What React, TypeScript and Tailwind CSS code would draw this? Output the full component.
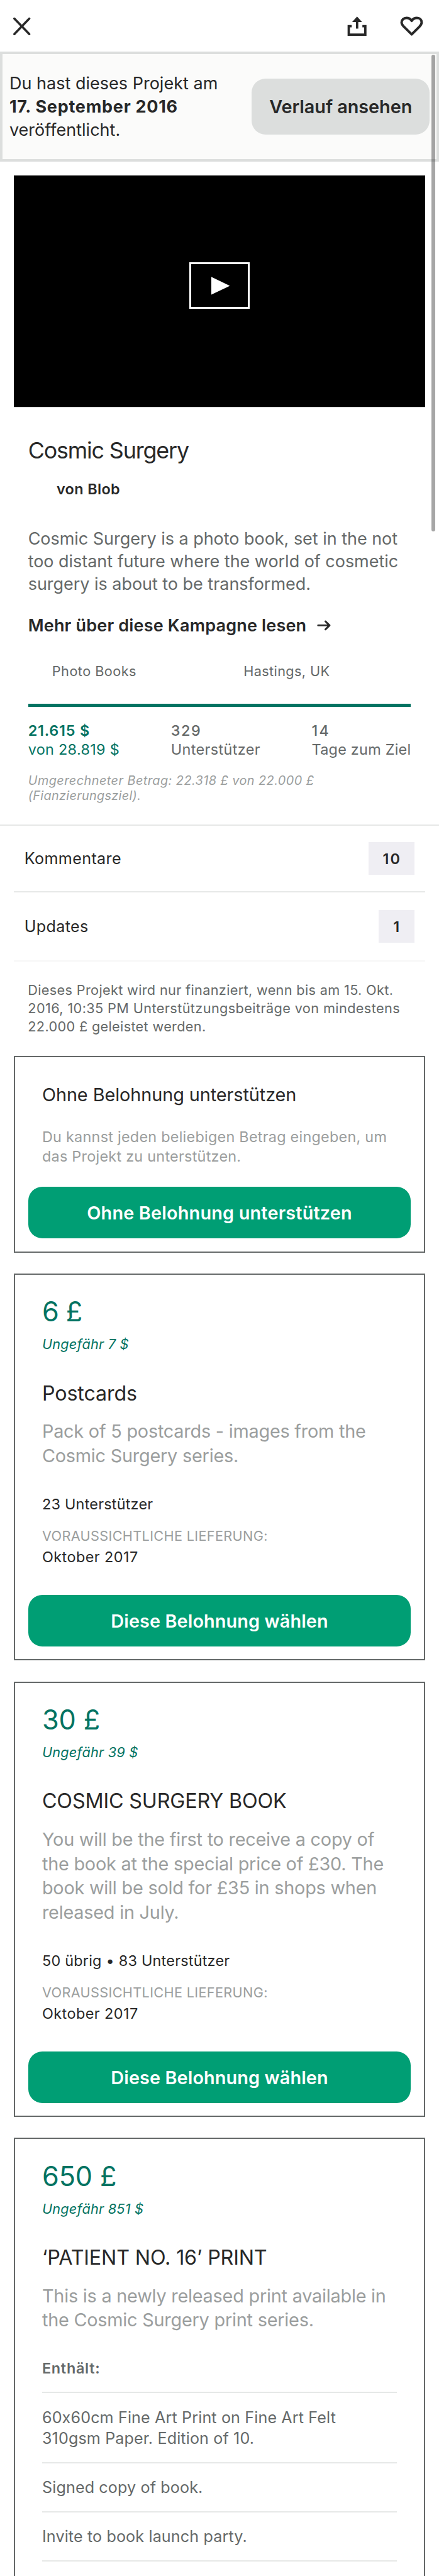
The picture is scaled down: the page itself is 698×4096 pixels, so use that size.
import type { ReactNode } from 'react'

function CloseIcon() {
  return (
    <svg width="32" height="32" viewBox="0 0 32 32" fill="none" stroke="#282828" strokeWidth="3.8" strokeLinecap="round">
      <path d="M3 2.8 28.6 29.2M28.6 2.8 3 29.2" />
    </svg>
  )
}

function ShareIcon() {
  return (
    <svg width="34" height="34" viewBox="593 28 34 34">
      <path d="M600.7 44.7H595.7V59.3H624V44.7H619" fill="none" stroke="#282828" strokeWidth="4" />
      <path d="M609.9 28.4 618.4 37.8H612V49H608V37.8H601.5Z" fill="#282828" />
    </svg>
  )
}

function HeartIcon() {
  return (
    <svg width="40" height="34" viewBox="683 28 40 34" fill="none" stroke="#282828" strokeWidth="4.2" strokeLinejoin="round">
      <path d="M703 58.8 689.6 45.6C687 42.8 685.7 41 685.7 38.4 685.7 33.9 689.4 30.7 694 30.7 698.2 30.7 701.2 32.8 703 35.6 704.8 32.8 707.8 30.7 712 30.7 716.6 30.7 720 33.9 720 38.4 720 41 718.8 42.8 716.2 45.6Z" />
    </svg>
  )
}

function Header() {
  return (
    <header className="flex h-[88px] items-start justify-between pl-[22px] pr-[27px] pt-[29px]">
      <CloseIcon />
      <div className="-mt-px flex gap-[56px]">
        <ShareIcon />
        <HeartIcon />
      </div>
    </header>
  )
}

function CreatorBanner() {
  return (
    <section className="flex h-[188px] items-center justify-between border-[4.3px] border-[#dcdedd] bg-[#fbfbfa] pl-[11.7px] pr-[11.7px]">
      <p className="pt-[1px] text-[29px] leading-[40px] tracking-[0.001em]">
        Du hast dieses Projekt am
        <br />
        <strong className="font-bold tracking-[0.028em]">17. September 2016</strong>
        <br />
        veröffentlicht.
      </p>
      <button className="flex h-[96px] w-[304px] items-center justify-center rounded-[24px] bg-[#dcdedd] text-[31px] font-semibold tracking-[-0.002em]">
        Verlauf ansehen
      </button>
    </section>
  )
}

function Video() {
  return (
    <section className="mx-[24px] mt-[24px] flex h-[397px] flex-col">
      <div className="flex grow items-center justify-center bg-black">
        <div className="mb-[19px] flex h-[80px] w-[104px] items-center justify-center border-[3.3px] border-white">
          <svg width="32" height="31" viewBox="0 0 32 31" className="ml-[3px]">
            <path d="M0 0.3 31.7 15.5 0 30.7Z" fill="#fff" />
          </svg>
        </div>
      </div>
      <div className="h-[2px] shrink-0 bg-[#e4e4e4]" />
    </section>
  )
}

function Project() {
  return (
    <section className="px-[48px]">
      <h1 className="mt-[50.2px] text-[38.5px] leading-[46px] tracking-[-0.032em]">Cosmic Surgery</h1>
      <div className="mt-[27.8px] pl-[48.6px] text-[25.2px] font-semibold leading-[31px] tracking-[0.015em]">von Blob</div>
      <p className="mt-[49.9px] whitespace-nowrap text-[29px] leading-[38.6px] tracking-[-0.001em] text-[#656969]">
        Cosmic Surgery is a photo book, set in the not
        <br />
        too distant future where the world of cosmetic
        <br />
        surgery is about to be transformed.
      </p>
      <div className="mt-[30.8px] flex items-center gap-[18px] text-[29px] font-semibold leading-[40px] tracking-[0.007em]">
        Mehr über diese Kampagne lesen
        <svg width="24" height="18" viewBox="0 0 24 18" fill="none" stroke="#282828" strokeWidth="3.2" strokeLinecap="round" strokeLinejoin="round">
          <path d="M2 9H21M14.5 2.2 21.4 9 14.5 15.8" />
        </svg>
      </div>
      <div className="mt-[43.2px] flex text-[23.3px] leading-[31px] text-[#656969]">
        <span className="w-[327px] pl-[41px] tracking-[0.021em]">Photo Books</span>
        <span className="pl-[41px] tracking-[0.0175em]">Hastings, UK</span>
      </div>
      <div className="mt-[39.1px] h-[6px] bg-[#037362]" />
      <div className="mt-[24.4px] flex text-[25.2px] leading-[32px] text-[#656969]">
        <div className="w-[244px] text-[#037362]">
          <div className="font-semibold tracking-[0.033em]">21.615 $</div>
          <div className="tracking-[0.0123em]">von 28.819 $</div>
        </div>
        <div className="w-[240.6px]">
          <div className="font-medium tracking-[0.07em]">329</div>
          <div className="tracking-[0.016em]">Unterstützer</div>
        </div>
        <div className="whitespace-nowrap">
          <div className="font-medium tracking-[0.1em]">14</div>
          <div className="tracking-[0.01em]">Tage zum Ziel</div>
        </div>
      </div>
      <p className="mt-[24.1px] text-[21.3px] italic leading-[26.2px] tracking-[0.024em] text-[#9b9e9e]">
        Umgerechneter Betrag: 22.318 £ von 22.000 £
        <br />
        <span className="tracking-[0.017em]">(Fianzierungsziel).</span>
      </p>
    </section>
  )
}

function LinkRow({ label, count, height, badge }: { label: string; count: string; height: string; badge: string }) {
  return (
    <div className={`flex items-center justify-between pl-[41.7px] pr-[42px] ${height}`}>
      <span className="pt-[2px] text-[27px] leading-[36px] tracking-[0.014em]">{label}</span>
      <span className={`flex h-[56px] items-center justify-center bg-[#efeef3] pl-[1px] pt-[1px] text-[25.2px] font-semibold tracking-[0.08em] ${badge}`}>{count}</span>
    </div>
  )
}

function Card({ children, className }: { children: ReactNode; className: string }) {
  return <section className={`mx-[24px] border-[2.2px] border-[#656969] px-[21.8px] ${className}`}>{children}</section>
}

function GreenButton({ children, className }: { children: ReactNode; className: string }) {
  return (
    <button className={`flex h-[88px] w-full items-center justify-center rounded-[24px] bg-[#009e74] pt-[1px] text-[31px] font-semibold text-white ${className}`}>
      {children}
    </button>
  )
}

type Reward = {
  price: string
  priceTracking: string
  approx: string
  title: string
  lines: string[]
  meta?: string
  items?: string[][]
}

const rewards: Reward[] = [
  {
    price: '6 £',
    priceTracking: 'tracking-[-0.014em]',
    approx: 'Ungefähr 7 $',
    title: 'Postcards',
    lines: ['Pack of 5 postcards - images from the', 'Cosmic Surgery series.'],
    meta: '23 Unterstützer',
  },
  {
    price: '30 £',
    priceTracking: 'tracking-[-0.002em]',
    approx: 'Ungefähr 39 $',
    title: 'COSMIC SURGERY BOOK',
    lines: [
      'You will be the first to receive a copy of',
      'the book at the special price of £30. The',
      'book will be sold for £35 in shops when',
      'released in July.',
    ],
    meta: '50 übrig • 83 Unterstützer',
  },
  {
    price: '650 £',
    priceTracking: 'tracking-[-0.003em]',
    approx: 'Ungefähr 851 $',
    title: '‘PATIENT NO. 16’ PRINT',
    lines: ['This is a newly released print available in', 'the Cosmic Surgery print series.'],
    items: [
      ['60x60cm Fine Art Print on Fine Art Felt', '310gsm Paper. Edition of 10.'],
      ['Signed copy of book.'],
      ['Invite to book launch party.'],
    ],
  },
]

function RewardCard({ reward }: { reward: Reward }) {
  return (
    <Card className={reward.items ? 'min-h-[800px] pt-[34.8px]' : 'mb-[36px] pt-[34.8px] pb-[21.8px]'}>
      <div className="px-[24px]">
        <div className={`text-[46.5px] leading-[56px] text-[#037362] ${reward.priceTracking}`}>{reward.price}</div>
        <div className="mt-[12.4px] text-[23.3px] italic leading-[31px] tracking-[0.01em] text-[#037362]">{reward.approx}</div>
        <h2 className="mt-[47px] whitespace-nowrap text-[34.7px] leading-[42px] tracking-[-0.005em]">{reward.title}</h2>
        <div className="mt-[24.2px] text-[31px] leading-[41.5px] tracking-[-0.008em] text-[#9b9e9e]">
          {reward.lines.map((line) => (
            <div key={line} className="whitespace-nowrap">{line}</div>
          ))}
        </div>
        {reward.meta && (
          <>
            <div className="mt-[46.7px] text-[25.2px] leading-[31px] tracking-[0.009em]">{reward.meta}</div>
            <div className="mt-[22.8px] text-[23.3px] leading-[31px] tracking-[0.0154em] text-[#9b9e9e]">VORAUSSICHTLICHE LIEFERUNG:</div>
            <div className="mt-[5.9px] text-[25.2px] leading-[31px] tracking-[0.018em]">Oktober 2017</div>
          </>
        )}
        {reward.items && (
          <div className="mt-[46.1px] text-[#656969]">
            <div className="text-[25.2px] font-semibold leading-[31px] tracking-[0.03em]">Enthält:</div>
            <div className="mt-[24.4px] h-[2px] bg-[#e6e8e7]" />
            {reward.items.map((lines) => (
              <div key={lines[0]}>
                <div className="pb-[22px] pt-[24px] text-[27px] leading-[36px] tracking-[0.005em]">
                  {lines.map((line) => (
                    <div key={line}>{line}</div>
                  ))}
                </div>
                <div className="h-[2px] bg-[#e6e8e7]" />
              </div>
            ))}
          </div>
        )}
      </div>
      {!reward.items && <GreenButton className="mt-[48px] tracking-[0.0033em]">Diese Belohnung wählen</GreenButton>}
    </Card>
  )
}

export default function App() {
  return (
    <div className="h-[4096px] w-[698px] overflow-hidden bg-white">
      <main className="relative w-[750px] bg-white font-['Inter','Liberation_Sans',sans-serif] text-[#282828] [zoom:0.9308]">
        <Header />
        <CreatorBanner />
        <Video />
        <Project />
        <div className="mt-[36.2px] h-[2px] bg-[#e6e8e7]" />
        <LinkRow label="Kommentare" count="10" height="h-[112px]" badge="w-[78px]" />
        <div className="mx-[24px] h-[2px] bg-[#e6e8e7]" />
        <LinkRow label="Updates" count="1" height="h-[116px]" badge="w-[61px]" />
        <div className="mx-[24px] h-[2px] bg-[#f6f6f6]" />
        <p className="ml-[47.6px] mt-[33.4px] whitespace-nowrap text-[23.3px] leading-[31px] tracking-[0.0155em] text-[#656969]">
          Dieses Projekt wird nur finanziert, wenn bis am 15. Okt.
          <br />
          <span className="tracking-[0.018em]">2016, 10:35 PM Unterstützungsbeiträge von mindestens</span>
          <br />
          22.000 £ geleistet werden.
        </p>
        <Card className="mb-[36px] mt-[34.6px] pb-[21.8px] pt-[44.9px]">
          <div className="px-[24px]">
            <h2 className="text-[31px] leading-[38px] tracking-[-0.0027em]">Ohne Belohnung unterstützen</h2>
            <p className="mt-[37.8px] whitespace-nowrap text-[25.2px] leading-[33px] tracking-[0.01em] text-[#9b9e9e]">
              Du kannst jeden beliebigen Betrag eingeben, um
              <br />
              das Projekt zu unterstützen.
            </p>
          </div>
          <GreenButton className="mt-[35.1px] tracking-[0.006em]">Ohne Belohnung unterstützen</GreenButton>
        </Card>
        {rewards.map((reward) => (
          <RewardCard key={reward.price} reward={reward} />
        ))}
        <div className="absolute right-[6.5px] top-[94px] h-[813.5px] w-[6px] rounded-full bg-black/35" />
      </main>
    </div>
  )
}
